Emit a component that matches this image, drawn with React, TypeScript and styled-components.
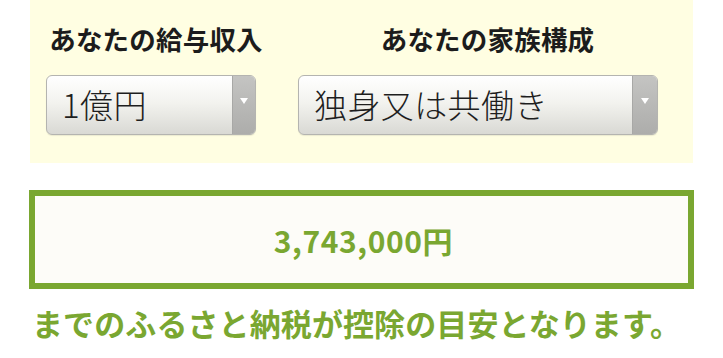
import * as React from 'react';
import styled, { createGlobalStyle } from 'styled-components';

const green = '#7aa731';

const GlobalStyle = createGlobalStyle`
  html, body {
    margin: 0;
    padding: 0;
    background: #ffffff;
  }
  body {
    font-family: 'Noto Sans CJK JP', 'Noto Sans', sans-serif;
  }
`;

const Page = styled.div`
  width: 723px;
  padding-left: 30px;
  box-sizing: border-box;
`;

const Panel = styled.div`
  width: 663px;
  height: 163px;
  background: #fffee2;
  display: grid;
  grid-template-columns: 252px 411px;
`;

const Column = styled.div`
  display: flex;
  flex-direction: column;
`;

const Label = styled.div`
  height: 75px;
  line-height: 78px;
  text-align: center;
  font-size: 26.5px;
  font-weight: 700;
  color: #1c1c1c;
  letter-spacing: 0.2px;
`;

const SelectBox = styled.div<{ width: number }>`
  margin-left: 16px;
  width: ${({ width }) => width}px;
  height: 60px;
  box-sizing: border-box;
  display: flex;
  border: 1px solid #b4b4b0;
  border-radius: 6px;
  overflow: hidden;
  background: linear-gradient(#ffffff 0%, #f3f3ef 45%, #d9d9d4 100%);
  box-shadow: 0 1px 1px rgba(0, 0, 0, 0.08);
`;

const SelectValue = styled.div`
  flex: 1;
  padding-left: 15px;
  line-height: 57px;
  font-size: 33px;
  font-weight: 300;
  color: #1e1e1e;
  white-space: nowrap;
  letter-spacing: 0.4px;
`;

const ArrowPart = styled.div<{ width: number }>`
  width: ${({ width }) => width}px;
  display: flex;
  justify-content: center;
  padding-top: 22px;
  box-sizing: border-box;
  background: linear-gradient(#c4c4c2, #adadab);
  border-left: 1px solid #a8a8a6;
`;

const Arrow = styled.div`
  width: 0;
  height: 0;
  border-left: 4px solid transparent;
  border-right: 4px solid transparent;
  border-top: 6px solid #ffffff;
`;

const ResultBox = styled.div`
  margin-top: 27px;
  width: 665px;
  margin-left: -1px;
  height: 99px;
  box-sizing: border-box;
  border: 6px solid ${green};
  background: #fdfcf8;
  display: flex;
  align-items: center;
  justify-content: center;
`;

const Amount = styled.div`
  font-size: 30px;
  font-weight: 700;
  color: ${green};
  letter-spacing: 0.6px;
  margin-left: 4px;
`;

const Note = styled.div`
  margin-top: 12px;
  margin-left: 2px;
  font-size: 31px;
  font-weight: 700;
  color: ${green};
  white-space: nowrap;
  line-height: 44px;
  letter-spacing: 0.1px;
`;

const Select = ({ value, width, arrow }: { value: string; width: number; arrow: number }) => (
  <SelectBox width={width}>
    <SelectValue>{value}</SelectValue>
    <ArrowPart width={arrow}>
      <Arrow />
    </ArrowPart>
  </SelectBox>
);

export default function App() {
  return (
    <>
      <GlobalStyle />
      <Page>
        <Panel>
          <Column>
            <Label>あなたの給与収入</Label>
            <Select value="1億円" width={210} arrow={23} />
          </Column>
          <Column>
            <Label>あなたの家族構成</Label>
            <Select value="独身又は共働き" width={360} arrow={25} />
          </Column>
        </Panel>
        <ResultBox>
          <Amount>3,743,000円</Amount>
        </ResultBox>
        <Note>までのふるさと納税が控除の目安となります。</Note>
      </Page>
    </>
  );
}
